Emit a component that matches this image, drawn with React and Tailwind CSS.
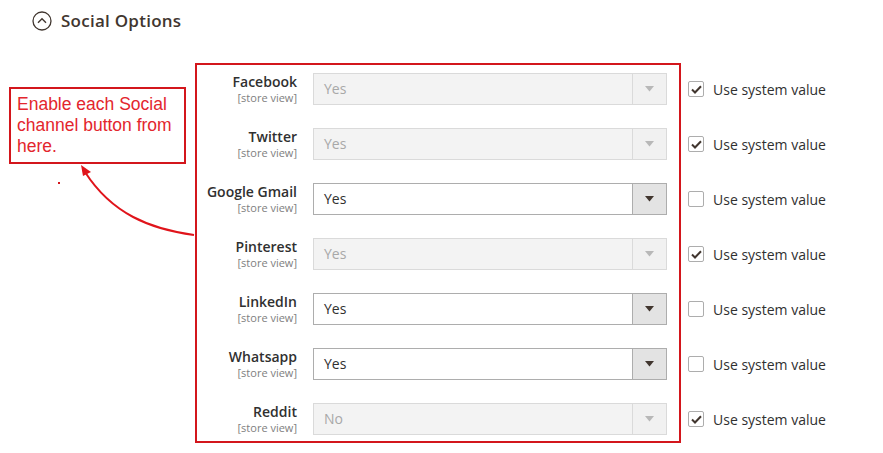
import React from "react";

const rows = [
  { name: "Facebook", value: "Yes", disabled: true },
  { name: "Twitter", value: "Yes", disabled: true },
  { name: "Google Gmail", value: "Yes", disabled: false },
  { name: "Pinterest", value: "Yes", disabled: true },
  { name: "LinkedIn", value: "Yes", disabled: false },
  { name: "Whatsapp", value: "Yes", disabled: false },
  { name: "Reddit", value: "No", disabled: true },
];

function Select({ value, disabled }) {
  return (
    <div
      className={
        "flex h-[32px] w-[354px] items-stretch border " +
        (disabled ? "border-[#dadada] bg-[#f3f3f3]" : "border-[#adadad] bg-white")
      }
    >
      <div
        className={
          "flex flex-1 items-center pl-[10px] pb-[1px] text-[14px] " +
          (disabled ? "text-[#a8a8a8]" : "text-[#303030]")
        }
      >
        {value}
      </div>
      <div
        className={
          "flex w-[34px] items-center justify-center border-l " +
          (disabled ? "border-[#dadada] bg-[#f1f1f1]" : "border-[#adadad] bg-[#e3e3e3]")
        }
      >
        <svg width="9" height="6" viewBox="0 0 9 6">
          <path d="M0 0 L9 0 L4.5 5.5 Z" fill={disabled ? "#b8b8b8" : "#41362f"} />
        </svg>
      </div>
    </div>
  );
}

function Checkbox({ checked }) {
  return (
    <div className="flex h-[32px] items-center">
      <div className="ml-[7px] flex h-[16px] w-[16px] items-center justify-center rounded-[2px] border border-[#adadad] bg-white">
        {checked && (
          <svg width="11" height="9" viewBox="0 0 11 9">
            <path d="M1 4.5 L4 7.5 L10 1.2" stroke="#41362f" strokeWidth="2" fill="none" />
          </svg>
        )}
      </div>
      <span className="ml-[9px] text-[14px] text-[#303030]">Use system value</span>
    </div>
  );
}

export default function App() {
  return (
    <div
      className="relative h-[453px] w-[883px] overflow-hidden bg-white"
      style={{ fontFamily: "'Open Sans', sans-serif" }}
    >
      {/* Header */}
      <div className="flex items-center pl-[32px] pt-[11px]">
        <svg width="20" height="20" viewBox="0 0 20 20">
          <circle cx="10" cy="10" r="9" stroke="#41362f" strokeWidth="1.3" fill="none" />
          <path d="M6 11.8 L10 7.8 L14 11.8" stroke="#41362f" strokeWidth="1.4" fill="none" />
        </svg>
        <span className="ml-[9px] text-[17px] font-semibold tracking-[0.015em] text-[#41362f] leading-[20px]">
          Social Options
        </span>
      </div>

      {/* Form */}
      <div className="ml-[195px] mt-[32px] flex">
        <div className="flex w-[486px] flex-col gap-[23px] border-2 border-[#d3161c] pb-[6px] pt-[8px]">
          {rows.map((r) => (
            <div key={r.name} className="flex h-[32px]">
              <div className="flex w-[100px] flex-col items-end">
                <span className="text-[14px] font-semibold leading-[18px] text-[#303030]">{r.name}</span>
                <span className="text-[11px] leading-[13px] text-[#808080]">[store view]</span>
              </div>
              <div className="ml-[16px]">
                <Select value={r.value} disabled={r.disabled} />
              </div>
            </div>
          ))}
        </div>
        <div className="flex flex-col gap-[23px] pt-[10px]">
          {rows.map((r) => (
            <Checkbox key={r.name} checked={r.disabled} />
          ))}
        </div>
      </div>

      {/* Annotation callout */}
      <div
        className="absolute left-[9px] top-[87px] h-[77px] w-[177px] border-2 border-[#d3161c] bg-white pl-[6px] pt-[5px] text-[17.5px] leading-[21px] text-[#e3262d]"
        style={{ fontFamily: "'Liberation Sans', Arial, sans-serif" }}
      >
        Enable each Social channel button from here.
      </div>
      <div className="absolute left-[58px] top-[182px] h-[2px] w-[2px] bg-[#d3161c]" />
      <svg className="absolute left-0 top-0" width="883" height="453" viewBox="0 0 883 453">
        <path d="M194 235 C150 229 112 214 85 172" stroke="#e0141b" strokeWidth="2" fill="none" />
        <path d="M81 165 L91 172 L83 176 Z" fill="#e0141b" />
      </svg>
    </div>
  );
}
